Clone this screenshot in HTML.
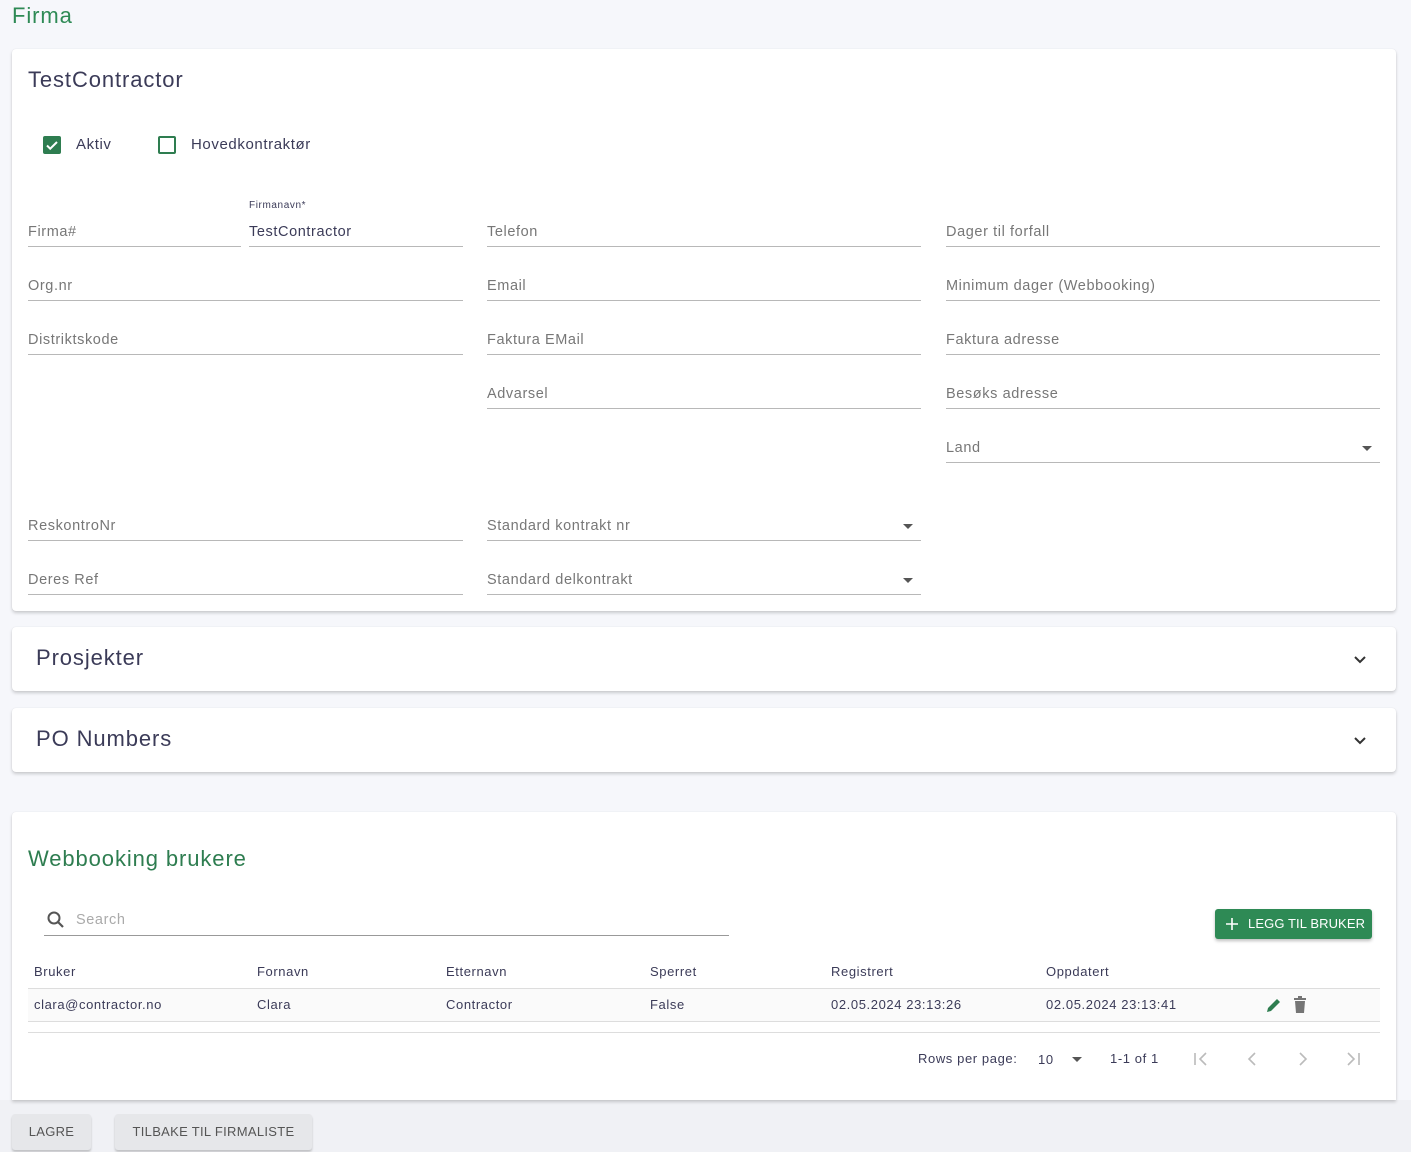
<!DOCTYPE html>
<html><head><style>
*{box-sizing:border-box;margin:0;padding:0}
body{width:1411px;height:1152px;background:#f6f7fb;font-family:"Liberation Sans",sans-serif;position:relative;overflow:hidden;color:#3b3b58;letter-spacing:.6px}
.abs{position:absolute}
.card{position:absolute;left:12px;width:1384px;background:#fff;border-radius:4px;box-shadow:0 2px 3px rgba(0,0,0,.18),0 0 1px rgba(0,0,0,.1)}
.f{position:absolute;border-bottom:1px solid #b8b8b8;height:20px;font-size:14.5px;color:#777}
.f span{position:absolute;left:0;bottom:6px;white-space:nowrap}
.dd:after{content:"";position:absolute;right:8px;bottom:11px;border:5px solid transparent;border-top-color:#555;border-bottom:0}
.th{position:absolute;top:964px;font-size:13px;color:#3b3b58}
.td{position:absolute;top:997px;font-size:13px;color:#3b3b58}
.btn{position:absolute;top:1114px;height:36px;background:#e6e7ea;border-radius:3px;box-shadow:0 2px 2px rgba(0,0,0,.2);font-size:13px;color:#555;line-height:36px;text-align:center;letter-spacing:.3px}
.h{font-size:22px;letter-spacing:.9px}
</style></head><body>
<div class="abs h" style="left:12px;top:3px;color:#2e8a55">Firma</div>
<div class="card" style="top:49px;height:562px"></div>
<div class="abs h" style="left:28px;top:67px">TestContractor</div>
<div class="abs" style="left:43px;top:136px;width:18px;height:18px;background:#2e7d50;border-radius:2px"><svg width="18" height="18" viewBox="0 0 18 18"><path d="M4 9.5l3.2 3.2L14 6" fill="none" stroke="#fff" stroke-width="2"/></svg></div>
<div class="abs" style="left:76px;top:136px;font-size:15px">Aktiv</div>
<div class="abs" style="left:158px;top:136px;width:18px;height:18px;border:2px solid #2e7d50;border-radius:2px"></div>
<div class="abs" style="left:191px;top:136px;font-size:15px">Hovedkontraktør</div>
<div class="abs" style="left:249px;top:200px;font-size:10px;color:#3b3b58">Firmanavn*</div>
<div class="f" style="left:28px;top:227px;width:213px"><span>Firma#</span></div>
<div class="f" style="left:249px;top:227px;width:214px;color:#3b3b58"><span>TestContractor</span></div>
<div class="f" style="left:487px;top:227px;width:434px"><span>Telefon</span></div>
<div class="f" style="left:946px;top:227px;width:434px"><span>Dager til forfall</span></div>
<div class="f" style="left:28px;top:281px;width:435px"><span>Org.nr</span></div>
<div class="f" style="left:487px;top:281px;width:434px"><span>Email</span></div>
<div class="f" style="left:946px;top:281px;width:434px"><span>Minimum dager (Webbooking)</span></div>
<div class="f" style="left:28px;top:335px;width:435px"><span>Distriktskode</span></div>
<div class="f" style="left:487px;top:335px;width:434px"><span>Faktura EMail</span></div>
<div class="f" style="left:946px;top:335px;width:434px"><span>Faktura adresse</span></div>
<div class="f" style="left:487px;top:389px;width:434px"><span>Advarsel</span></div>
<div class="f" style="left:946px;top:389px;width:434px"><span>Besøks adresse</span></div>
<div class="f dd" style="left:946px;top:443px;width:434px"><span>Land</span></div>
<div class="f" style="left:28px;top:521px;width:435px"><span>ReskontroNr</span></div>
<div class="f dd" style="left:487px;top:521px;width:434px"><span>Standard kontrakt nr</span></div>
<div class="f" style="left:28px;top:575px;width:435px"><span>Deres Ref</span></div>
<div class="f dd" style="left:487px;top:575px;width:434px"><span>Standard delkontrakt</span></div>

<div class="card" style="top:627px;height:64px"></div>
<div class="abs h" style="left:36px;top:645px">Prosjekter</div>
<svg class="abs" style="left:1352px;top:652px" width="16" height="16" viewBox="0 0 16 16"><path d="M3 5l5 5 5-5" fill="none" stroke="#333" stroke-width="2"/></svg>
<div class="card" style="top:708px;height:64px"></div>
<div class="abs h" style="left:36px;top:726px">PO Numbers</div>
<svg class="abs" style="left:1352px;top:733px" width="16" height="16" viewBox="0 0 16 16"><path d="M3 5l5 5 5-5" fill="none" stroke="#333" stroke-width="2"/></svg>

<div class="abs" style="left:0;top:1100px;width:1411px;height:52px;background:#f0f1f5"></div>
<div class="card" style="top:812px;height:288px;border-radius:4px 4px 0 0"></div>
<div class="abs h" style="left:28px;top:846px;color:#2e7d50">Webbooking brukere</div>
<svg class="abs" style="left:46px;top:910px" width="20" height="20" viewBox="0 0 20 20"><circle cx="8" cy="8" r="5.5" fill="none" stroke="#555" stroke-width="2"/><path d="M12 12l5 5" stroke="#555" stroke-width="2.2"/></svg>
<div class="abs" style="left:76px;top:912px;font-size:14.5px;color:#aaa">Search</div>
<div class="abs" style="left:44px;top:935px;width:685px;border-top:1px solid #999"></div>
<div class="abs" style="left:1215px;top:909px;width:157px;height:30px;background:#2e8a55;border-radius:3px;box-shadow:0 2px 3px rgba(0,0,0,.25);color:#fff;font-size:13px;line-height:30px;padding-left:33px;letter-spacing:.1px">LEGG TIL BRUKER<svg style="position:absolute;left:10px;top:8px" width="14" height="14" viewBox="0 0 14 14"><path d="M7 1v12M1 7h12" stroke="#fff" stroke-width="1.6"/></svg></div>
<div class="th" style="left:34px">Bruker</div><div class="th" style="left:257px">Fornavn</div><div class="th" style="left:446px">Etternavn</div><div class="th" style="left:650px">Sperret</div><div class="th" style="left:831px">Registrert</div><div class="th" style="left:1046px">Oppdatert</div>
<div class="abs" style="left:28px;top:988px;width:1352px;height:34px;background:#fafafa;border-top:1px solid #ddd;border-bottom:1px solid #ddd"></div>
<div class="td" style="left:34px">clara@contractor.no</div><div class="td" style="left:257px">Clara</div><div class="td" style="left:446px">Contractor</div><div class="td" style="left:650px">False</div><div class="td" style="left:831px">02.05.2024 23:13:26</div><div class="td" style="left:1046px">02.05.2024 23:13:41</div>
<svg class="abs" style="left:1265px;top:996px" width="18" height="18" viewBox="0 0 18 18"><path d="M2 16l1-4L12 3l3 3-9 9z" fill="#2e7d50"/></svg>
<svg class="abs" style="left:1292px;top:996px" width="16" height="18" viewBox="0 0 16 18"><path d="M2 2h12v2H2zM6 0h4v2H6zM3 5h10l-1 12H4z" fill="#757575"/></svg>
<div class="abs" style="left:28px;top:1032px;width:1352px;border-top:1px solid #ddd"></div>
<div class="abs" style="left:918px;top:1051px;font-size:13px">Rows per page:</div>
<div class="abs" style="left:1038px;top:1052px;font-size:13px">10</div>
<div class="abs" style="left:1072px;top:1057px;border:5px solid transparent;border-top-color:#555;border-bottom:0"></div>
<div class="abs" style="left:1110px;top:1051px;font-size:13px">1-1 of 1</div>
<svg class="abs" style="left:1192px;top:1050px" width="180" height="18" viewBox="0 0 180 18"><g fill="none" stroke="#bbb" stroke-width="1.6"><path d="M3 3v12M14 3l-6 6 6 6M63 3l-6 6 6 6M108 3l6 6-6 6M156 3l6 6-6 6M167 3v12"/></g></svg>
<div class="btn" style="left:12px;width:79px">LAGRE</div>
<div class="btn" style="left:115px;width:197px">TILBAKE TIL FIRMALISTE</div>
</body></html>
